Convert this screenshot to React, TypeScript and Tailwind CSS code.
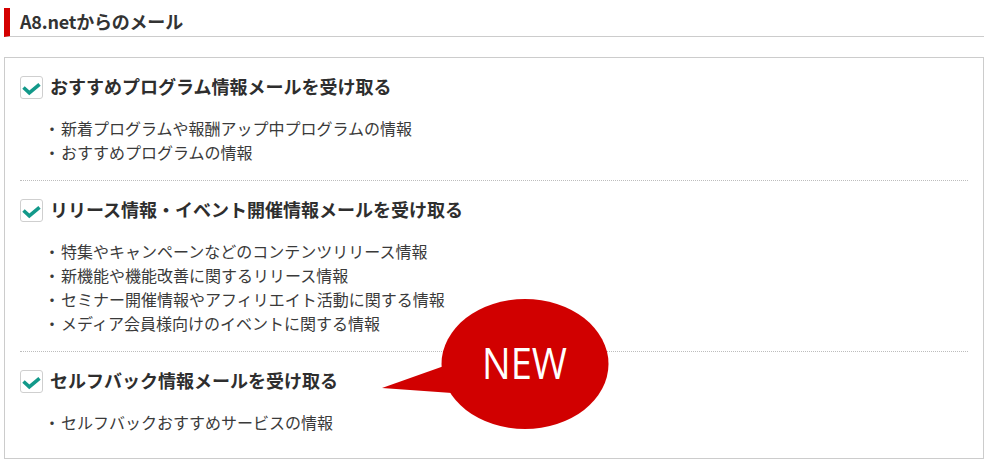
import React from "react";

const sections = [
  {
    title: "おすすめプログラム情報メールを受け取る",
    items: ["新着プログラムや報酬アップ中プログラムの情報", "おすすめプログラムの情報"],
  },
  {
    title: "リリース情報・イベント開催情報メールを受け取る",
    items: [
      "特集やキャンペーンなどのコンテンツリリース情報",
      "新機能や機能改善に関するリリース情報",
      "セミナー開催情報やアフィリエイト活動に関する情報",
      "メディア会員様向けのイベントに関する情報",
    ],
  },
  {
    title: "セルフバック情報メールを受け取る",
    items: ["セルフバックおすすめサービスの情報"],
  },
];

function CheckBox() {
  return (
    <div className="w-[23px] h-[23px] shrink-0 rounded-[3px] border border-[#cfcfcf] bg-white">
      <svg width="21" height="21" viewBox="0 0 21 21">
        <path d="M2.5 10.5 L8.3 15.8 L18.5 7.3" fill="none" stroke="#12998a" strokeWidth="3.6" />
      </svg>
    </div>
  );
}

export default function App() {
  return (
    <div
      className="relative w-[990px] h-[466px] bg-white text-[#333]"
      style={{ fontFamily: '"Noto Sans CJK JP", "Noto Sans", sans-serif' }}
    >
      <div className="ml-[4px] w-[980px] pt-[8px]">
        <div className="h-[29px] border-l-[6px] border-l-[#d40000] border-b border-b-[#cccccc] pl-[10px] flex items-center">
          <span className="text-[18px] font-bold leading-none tracking-[-0.2px] pb-[2px]">A8.netからのメール</span>
        </div>
        <div className="mt-[20px] border border-[#cccccc] px-[15px] pb-[7px]">
          {sections.map((s, i) => (
            <div
              key={i}
              className={
                i < sections.length - 1
                  ? "pt-[18px] pb-[16px] border-b border-dotted border-b-[#bdbdbd]"
                  : "pt-[18px] pb-[17px]"
              }
            >
              <div className="flex items-center gap-[7px] h-[23px]">
                <CheckBox />
                <span className="text-[18px] font-bold leading-[23px] -mt-[2px] text-[#2e2e2e]">{s.title}</span>
              </div>
              <ul className="mt-[17px] text-[16px] leading-[24px] text-[#3a3a3a]">
                {s.items.map((it, j) => (
                  <li key={j} className="flex">
                    <span className="w-[17px] shrink-0 ml-[24px]">・</span>
                    <span>{it}</span>
                  </li>
                ))}
              </ul>
            </div>
          ))}
        </div>
      </div>
      <svg
        className="absolute left-[378px] top-[296px]"
        width="234"
        height="136"
        viewBox="378 296 234 136"
      >
        <path d="M444 366 L382 388 L452 393 Z" fill="#d10000" />
        <ellipse cx="525" cy="364" rx="83.5" ry="65" fill="#d10000" />
        <text
          x="482"
          y="379"
          fill="#ffffff"
          fontSize="44"
          textLength="85"
          lengthAdjust="spacingAndGlyphs"
          style={{ fontFamily: '"Open Sans", "Noto Sans", sans-serif' }}
        >
          NEW
        </text>
      </svg>
    </div>
  );
}
